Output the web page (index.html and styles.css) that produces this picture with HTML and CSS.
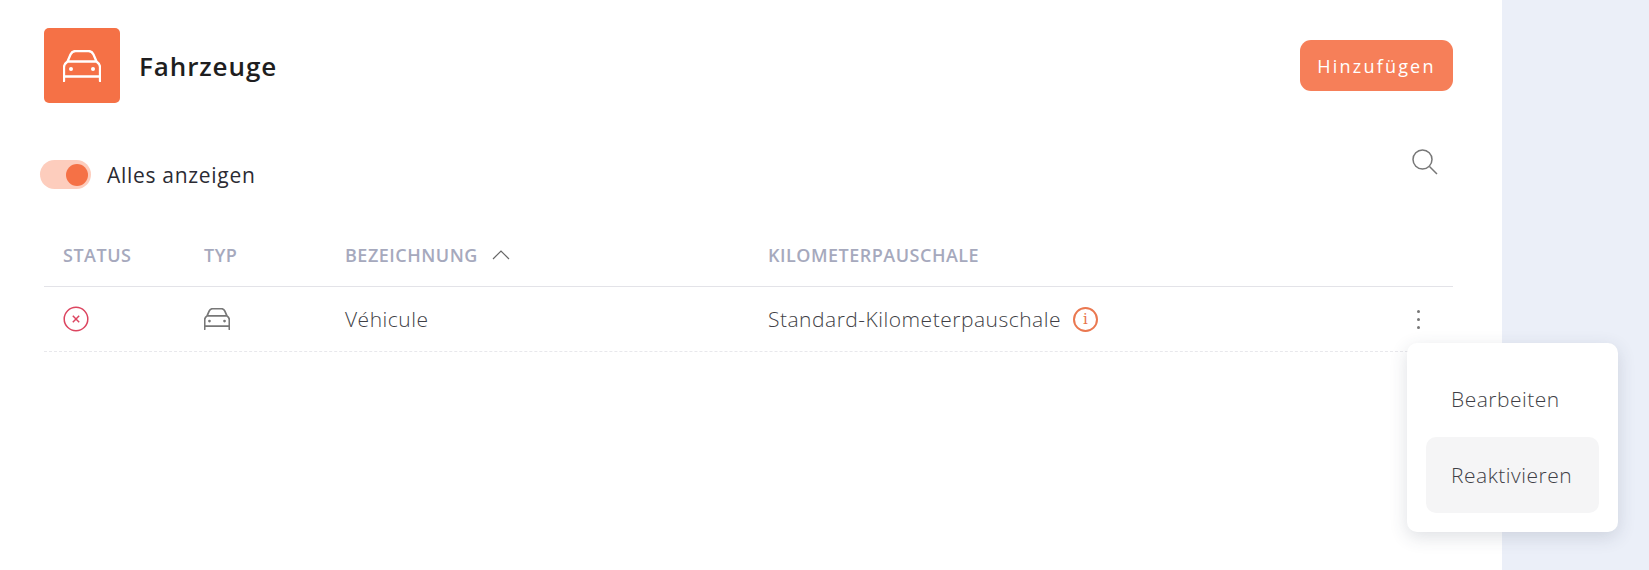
FILE: index.html
```html
<!DOCTYPE html>
<html lang="de">
  <head>
    <meta charset="UTF-8" />
    <meta name="viewport" content="width=device-width, initial-scale=1.0" />
    <title>Fahrzeuge</title>
    <link rel="stylesheet" href="styles.css">
  </head>
  <body>
    <svg class="sprite" aria-hidden="true">
      <symbol id="car" viewBox="0 0 38 32">
        <path d="M1 31V17C1 14.500 2.500 13 4.500 11.500L7.500 4.500C8.500 2.300 10 1 12.500 1H25.500C28 1 29.500 2.300 30.500 4.500L33.500 11.500C35.500 13 37 14.500 37 17V31M1 26.500H37M4.500 11.500H33.500" fill="none" stroke="currentColor" stroke-linecap="round" stroke-linejoin="round" />
        <circle cx="8" cy="19" r="2" fill="currentColor" />
        <circle cx="30" cy="19" r="2" fill="currentColor" />
      </symbol>
    </svg>

    <main class="panel">
      <!-- Title row -->
      <header class="pageHeader">
        <div class="pageTitle">
          <div class="titleIcon"><svg class="carLarge"><use href="#car" /></svg></div>
          <h1>Fahrzeuge</h1>
        </div>
        <button class="addButton">Hinzufügen</button>
      </header>

      <!-- Filter row -->
      <div class="filterRow">
        <label class="toggleLabel">
          <span class="toggle"><span class="toggleKnob"></span></span>
          Alles anzeigen
        </label>
        <svg class="searchIcon" viewBox="0 0 26 26">
          <circle cx="10.500" cy="10.500" r="9.500" fill="none" stroke="currentColor" stroke-width="1.500" />
          <path d="M17.500 17.500L25 25" fill="none" stroke="currentColor" stroke-width="1.500" />
        </svg>
      </div>

      <div class="vehicleTable">
        <div class="tableRow tableHead">
          <div>Status</div>
          <div>Typ</div>
          <div class="sortable">
            Bezeichnung
            <svg class="sortIcon" viewBox="0 0 18 10"><path d="M1 9L9 1L17 9" fill="none" stroke="currentColor" stroke-width="1.200" /></svg>
          </div>
          <div>Kilometerpauschale</div>
          <div></div>
        </div>
        <div class="tableRow tableBody">
          <div>
            <svg class="statusIcon" viewBox="0 0 26 26">
              <circle cx="13" cy="13" r="11.800" fill="none" stroke="currentColor" stroke-width="1.500" />
              <path d="M9.800 9.800L16.200 16.200M16.200 9.800L9.800 16.200" fill="none" stroke="currentColor" stroke-width="1.500" />
            </svg>
          </div>
          <div><svg class="carSmall"><use href="#car" /></svg></div>
          <div>Véhicule</div>
          <div class="rateCell">
            Standard-Kilometerpauschale
            <span class="infoIcon">i</span>
          </div>
          <div class="moreCell"><span class="moreDots"><i></i><i></i><i></i></span></div>
        </div>
      </div>
    </main>
    <div class="sideArea"></div>

    <!-- Row menu -->
    <div class="rowMenu">
      <div class="menuItem">Bearbeiten</div>
      <div class="menuItem menuItemActive">Reaktivieren</div>
    </div>
  </body>
</html>
```

FILE: styles.css
```css
* {
  box-sizing: border-box;
}
body {
  display: flex;
  height: 570px;
  margin: 0;
  overflow: hidden;
  font-family: "Open Sans", sans-serif;
  background-color: #ebeff8;
  color: #333;
}
.sprite {
  display: none;
}
.panel {
  width: 1502px;
  height: 570px;
  padding: 28px 49px 0 44px;
  background-color: #fff;
}
.sideArea {
  flex: 1;
}
.pageHeader {
  display: flex;
  justify-content: space-between;
  align-items: center;
}
.pageTitle {
  display: flex;
  align-items: center;
}
.titleIcon {
  display: flex;
  justify-content: center;
  align-items: center;
  width: 76px;
  height: 75px;
  margin-right: 19px;
  border-radius: 5px;
  background-color: #f57146;
  color: #fff;
}
.carLarge {
  width: 38px;
  height: 32px;
  stroke-width: 2.300;
}
h1 {
  margin: 0;
  font-size: 26px;
  font-weight: 600;
  letter-spacing: 0.900px;
  color: #1e1e20;
}
.addButton {
  width: 153px;
  height: 51px;
  border: none;
  border-radius: 11px;
  background-color: #f67f59;
  color: white;
  font-family: inherit;
  font-size: 18px;
  font-weight: 500;
  letter-spacing: 2.200px;
}
.filterRow {
  display: flex;
  justify-content: space-between;
  align-items: flex-start;
  margin: 46px 0 0 -4px;
  padding-right: 15px;
}
.toggleLabel {
  display: flex;
  align-items: center;
  margin-top: 11px;
  font-size: 21px;
  font-weight: 500;
  letter-spacing: 0.700px;
  color: #2b2b33;
}
.toggle {
  display: flex;
  justify-content: flex-end;
  align-items: center;
  width: 51px;
  height: 29px;
  margin-right: 16px;
  padding-right: 3px;
  border-radius: 15px;
  background-color: #fdcdbd;
}
.toggleKnob {
  width: 22px;
  height: 22px;
  border-radius: 50%;
  background-color: #f57146;
}
.searchIcon {
  width: 26px;
  height: 26px;
  color: #777;
}
.tableRow {
  display: grid;
  grid-template-columns: 141px 141px 423px 1fr 36px;
  align-items: center;
  padding-left: 19px;
}
.tableHead {
  height: 59px;
  margin-top: 39px;
  padding-bottom: 5px;
  border-bottom: 1px solid #e3e3e8;
  font-size: 18px;
  font-weight: 600;
  letter-spacing: 0.500px;
  text-transform: uppercase;
  color: #a6a9bd;
}
.sortable {
  display: flex;
  align-items: center;
}
.sortIcon {
  width: 18px;
  height: 10px;
  margin-left: 14px;
  color: #666;
}
.tableBody {
  height: 65px;
  border-bottom: 1px dashed #e8e8ec;
  font-size: 21px;
  font-weight: 300;
  letter-spacing: 0.500px;
  color: #3f3f46;
}
.statusIcon {
  display: block;
  width: 26px;
  height: 26px;
  color: #dc4560;
}
.carSmall {
  display: block;
  width: 26px;
  height: 22px;
  stroke-width: 2.500;
  color: #777;
}
.rateCell {
  display: flex;
  align-items: center;
}
.infoIcon {
  display: flex;
  justify-content: center;
  align-items: center;
  width: 25px;
  height: 25px;
  margin-left: 12px;
  border: 2px solid #ea7850;
  border-radius: 50%;
  font-family: "DejaVu Serif", serif;
  font-size: 15px;
  font-weight: 400;
  letter-spacing: 0;
  color: #e8734a;
}
.moreCell {
  display: flex;
}
.moreDots {
  display: flex;
  flex-direction: column;
  gap: 5px;
}
.moreDots i {
  width: 3px;
  height: 3px;
  border-radius: 50%;
  background-color: #777;
}
.rowMenu {
  position: absolute;
  top: 343px;
  left: 1407px;
  width: 211px;
  height: 189px;
  padding: 18px 19px;
  border-radius: 10px;
  background-color: #fff;
  box-shadow: 0 5px 18px rgba(50, 60, 90, 0.16);
  font-size: 21px;
  font-weight: 300;
  letter-spacing: 0.500px;
  color: #3f3f46;
}
.menuItem {
  display: flex;
  align-items: center;
  height: 76px;
  padding-left: 25px;
  border-radius: 10px;
}
.menuItemActive {
  background-color: #f5f5f6;
}
```
